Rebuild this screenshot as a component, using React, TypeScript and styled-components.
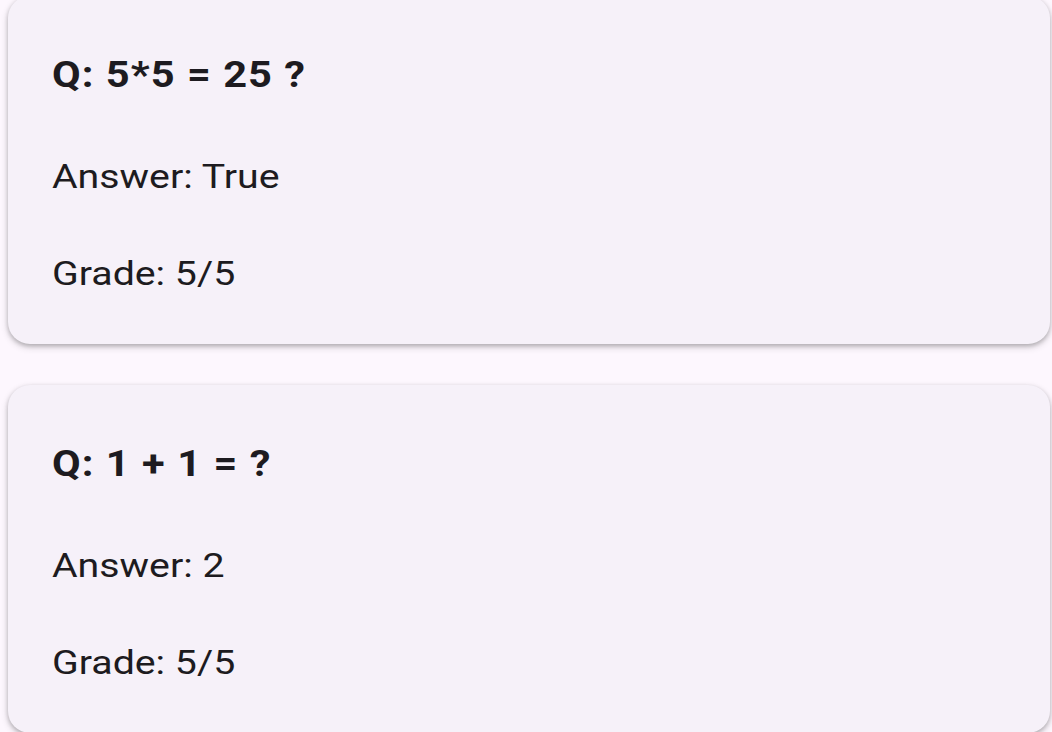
import React from "react";
import styled, { createGlobalStyle } from "styled-components";

const GlobalStyle = createGlobalStyle`
  html, body {
    margin: 0;
    padding: 0;
    background: #fdf7fe;
    overflow: hidden;
  }
  body {
    font-family: Roboto, "Liberation Sans", sans-serif;
    color: #1d1b20;
  }
`;

const List = styled.div`
  display: flex;
  flex-direction: column;
  gap: 41px;
  margin-top: -4px;
  padding: 0 2px 0 8px;
`;

const Card = styled.section`
  background: #f6f1f9;
  border-radius: 22px;
  height: 348px;
  box-sizing: border-box;
  padding: 57px 44px 0 44px;
  box-shadow: 0 3px 7px 1px rgba(0, 0, 0, 0.12), 0 2px 4px rgba(0, 0, 0, 0.22);
  display: flex;
  flex-direction: column;
  align-items: flex-start;
`;

const Question = styled.div`
  font-size: 36px;
  line-height: 44px;
  font-weight: 700;
  letter-spacing: 0.9px;
  margin: 0 0 59px 0;
  white-space: nowrap;
  transform: scaleX(1.155);
  transform-origin: left center;
`;

const Line = styled.div<{ $last?: boolean }>`
  font-size: 34px;
  line-height: 40px;
  font-weight: 400;
  color: #1d1b20;
  margin-bottom: ${(p) => (p.$last ? "0" : "57px")};
  white-space: nowrap;
  transform: scaleX(1.155);
  transform-origin: left center;
`;

const data = [
  { q: "Q: 5*5 = 25 ?", a: "Answer: True", g: "Grade: 5/5" },
  { q: "Q: 1 + 1 = ?", a: "Answer: 2", g: "Grade: 5/5" },
];

export default function App() {
  return (
    <>
      <GlobalStyle />
      <List>
        {data.map((d, i) => (
          <Card key={i}>
            <Question>{d.q}</Question>
            <Line>{d.a}</Line>
            <Line $last>{d.g}</Line>
          </Card>
        ))}
      </List>
    </>
  );
}
